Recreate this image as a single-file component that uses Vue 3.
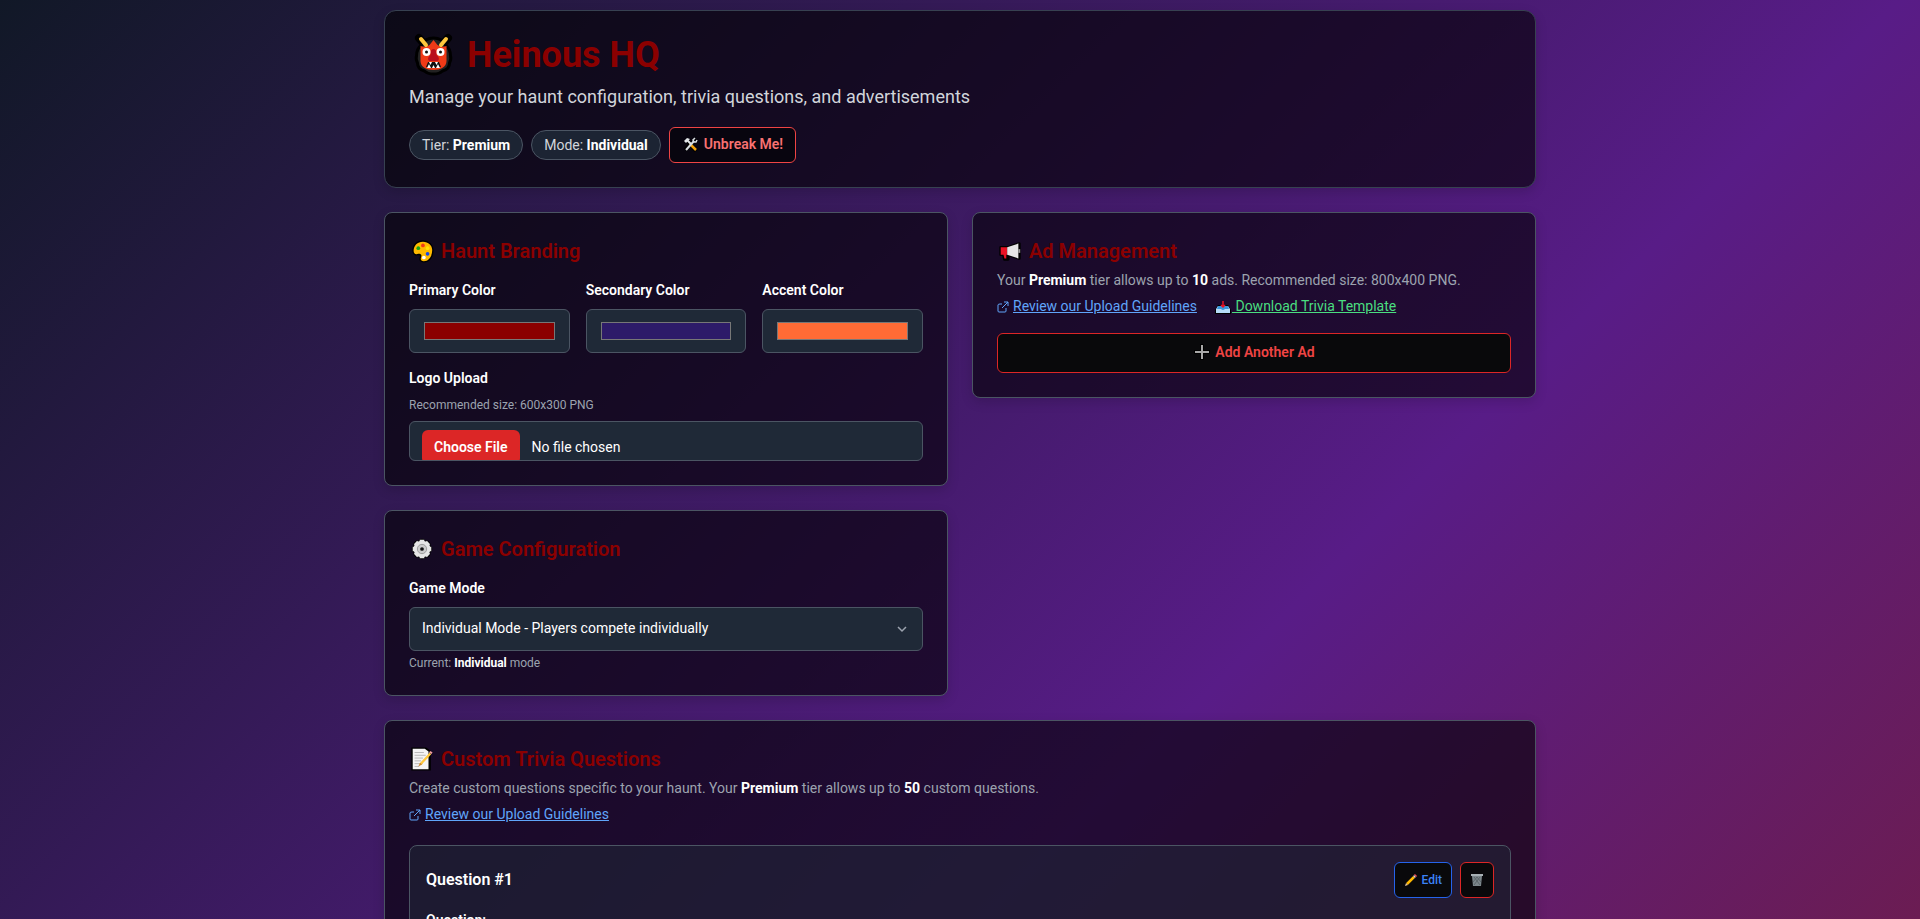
<script setup>
import { ref } from 'vue'

const colors = ref([
  { id: 'primary', label: 'Primary Color', value: '#8b0000' },
  { id: 'secondary', label: 'Secondary Color', value: '#2d1b69' },
  { id: 'accent', label: 'Accent Color', value: '#ff6b35' },
])
const mode = ref('individual')
</script>

<template>
  <div class="page">
    <main class="container">
      <header class="header">
        <h1>
          <svg class="ico-xl" viewBox="0 0 48 48" aria-hidden="true">
            <path d="M10 7l7 8M39 7l-7 8" stroke="#000" stroke-width="8" stroke-linecap="round" />
            <path d="M24.500 7c6 0 10 3 12 7 4 3 5 7 5 11 1 3 0 5-1 7 0 4-3 7-7 8-2 2-5 3-9 3s-7-1-9-3c-4-1-7-4-7-8-1-2-2-4-1-7 0-4 1-8 5-11 2-4 6-7 12-7z" fill="#222" stroke="#000" stroke-width="3" />
            <path d="M24.500 9l4 5c3 2 6 2 9 1v15c0 6-6 9-13 9s-13-3-13-9V15c3 1 6 1 9-1z" fill="#f03a17" />
            <path d="M24.500 18c3 0 3 4 3 6 3 2 3 5 1 6h-8c-2-1-2-4 1-6 0-2 0-6 3-6z" fill="#b80f1e" />
            <circle cx="17.500" cy="21" r="4" fill="#fff" /><circle cx="31.500" cy="21" r="4" fill="#fff" />
            <circle cx="17.500" cy="21" r="1.500" fill="#111" /><circle cx="31.500" cy="21" r="1.500" fill="#111" />
            <path d="M19 31h11l2 5-4 1h-7l-4-1z" fill="#111" />
            <path d="M20 31l1.500 3 1.500-3zM26 31l1.500 3 1.500-3zM18 37l2-4 2 4zM23 37l1.500-3 1.500 3zM27 37l2-4 2 4z" fill="#fff" />
            <path d="M12 8l5 6M37 8l-5 6" stroke="#ffc83d" stroke-width="4" stroke-linecap="round" />
          </svg>
          <span>Heinous HQ</span>
        </h1>
        <p class="lead">Manage your haunt configuration, trivia questions, and advertisements</p>
        <div class="badges">
          <span class="badge">Tier: <b>Premium</b></span>
          <span class="badge">Mode: <b>Individual</b></span>
          <button type="button" class="btn unbreak">
            <svg class="ico-m" viewBox="0 0 18 18" aria-hidden="true">
              <path d="M4 5l10 11M3 15L14 4" stroke="#000" stroke-width="4" />
              <path d="M8 9l6 6" stroke="#f5a30a" stroke-width="2.500" />
              <path d="M4 15l8-9" stroke="#d8dde0" stroke-width="2" />
              <path d="M13 3l-2 2 1 2 2 0 1-2" stroke="#d8dde0" stroke-width="1.500" />
              <path d="M2 6l3-3 3 1-4 4z" fill="#e2e6e8" />
              <path d="M5 5l4 4" stroke="#e2e6e8" stroke-width="2" />
            </svg>
            Unbreak Me!
          </button>
        </div>
      </header>

      <div class="columns">
        <div class="stack">
          <section class="card">
            <h2>
              <svg class="ico-l" viewBox="0 0 28 28" aria-hidden="true">
                <path d="M15 4c6 0 10 4 10 9 0 6-3 12-9 12-3 0-4-2-3-4 1-3 0-4-3-4-3 1-5 0-5-3 0-6 4-10 10-10z" fill="#ffb900" stroke="#000" stroke-width="3" paint-order="stroke" />
                <circle cx="10" cy="11" r="2" fill="#16a716" /><circle cx="15" cy="8" r="2" fill="#f03a17" />
                <circle cx="20" cy="11" r="2" fill="#ffe100" /><circle cx="20" cy="17" r="2" fill="#1848e8" />
                <circle cx="16" cy="21" r="2" fill="#fff" />
              </svg>
              <span>Haunt Branding</span>
            </h2>
            <div class="swatches">
              <div v-for="c in colors" :key="c.id" class="field">
                <label :for="c.id">{{ c.label }}</label>
                <input :id="c.id" v-model="c.value" type="color" class="control color">
              </div>
            </div>
            <div class="field upload">
              <label for="logo">Logo Upload</label>
              <p class="hint">Recommended size: 600x300 PNG</p>
              <input id="logo" type="file" accept="image/png" class="control file">
            </div>
          </section>

          <section class="card">
            <h2>
              <svg class="ico-l" viewBox="0 0 28 28" aria-hidden="true">
                <g stroke="#000" stroke-width="8" stroke-linecap="round"><path d="M14 7v14M7 14h14M9 9l10 10M19 9L9 19" /></g>
                <g stroke="#e6e6e6" stroke-width="5"><path d="M14 4v20M4 14h20M7 7l14 14M21 7L7 21" /></g>
                <circle cx="14" cy="14" r="9" fill="#e6e6e6" />
                <circle cx="14" cy="14" r="5" fill="#ccc" stroke="#999" />
                <circle cx="14" cy="14" r="2" fill="#111" />
              </svg>
              <span>Game Configuration</span>
            </h2>
            <div class="field">
              <label for="mode">Game Mode</label>
              <div class="select">
                <select id="mode" v-model="mode" class="control">
                  <option value="individual">Individual Mode - Players compete individually</option>
                </select>
                <svg class="chevron" viewBox="0 0 12 8" aria-hidden="true"><path d="M2 2l4 4 4-4" fill="none" stroke="#9ca3af" stroke-width="1.500" /></svg>
              </div>
            </div>
            <p class="current">Current: <b>Individual</b> mode</p>
          </section>
        </div>

        <section class="card">
          <h2>
            <svg class="ico-l" viewBox="0 0 28 28" aria-hidden="true">
              <path d="M24 6v16l-12-4v5H8l-1-5H4v-8h8z" fill="#000" stroke="#000" stroke-width="3" stroke-linejoin="round" />
              <path d="M4 10h7v8H4zM7 18h3v4H8z" fill="#e81224" />
              <path d="M11 10l12-4v16l-12-4z" fill="#e6e6e6" /><path d="M24 12v4" stroke="#999" stroke-width="2" />
            </svg>
            <span>Ad Management</span>
          </h2>
          <p class="text">Your <b>Premium</b> tier allows up to <b>10</b> ads. Recommended size: 800x400 PNG.</p>
          <div class="links">
            <span class="link">
              <svg class="ico-s" viewBox="0 0 12 12" aria-hidden="true"><path d="M5 3H3Q1 3 1 4v6q0 1 1 1h6q1 0 1-1V7M7 1h4v4M11 1L5 7" fill="none" stroke="#60a5fa" /></svg>
              <a href="#guidelines">Review our Upload Guidelines</a>
            </span>
            <a href="#template" class="green"><svg class="ico-tray" viewBox="0 0 18 18" aria-hidden="true">
              <path d="M4 8h10l3 5v4H1v-4z" fill="#000" />
              <path d="M4 9h10l2 3v4H2v-4z" fill="#b5dcf7" /><path d="M4 9h10l1 3h-4q-2 2-4 0H3z" fill="#3a96dd" />
              <path d="M9 4v6M7 8l2 2 2-2" stroke="#e81224" stroke-width="1.500" fill="none" />
            </svg>&nbsp;Download Trivia Template</a>
          </div>
          <button type="button" class="btn add">
            <svg class="ico-m" viewBox="0 0 18 18" aria-hidden="true"><path d="M9 1v16M1 9h16" stroke="#000" stroke-width="4" /><path d="M9 2v14M2 9h14" stroke="#a8a8a8" stroke-width="2" /></svg>
            Add Another Ad
          </button>
        </section>
      </div>

      <section class="card">
        <h2>
          <svg class="ico-l" viewBox="0 0 28 28" aria-hidden="true">
            <path d="M4 3h14l4 3v19H4z" stroke="#000" stroke-width="3" />
            <path d="M4 3h13l4 3v19H4z" fill="#f4f4f4" />
            <path d="M6 7h10M6 10h12M6 13h9M6 16h7M6 19h9M6 22h5" stroke="#b4b4b4" />
            <path d="M23 8L12 20" stroke="#ffc83d" stroke-width="2.500" /><path d="M24 6l-1 2" stroke="#f2a0a0" stroke-width="3" />
            <path d="M12 18l-2 4 4-2z" fill="#c9842f" />
          </svg>
          <span>Custom Trivia Questions</span>
        </h2>
        <p class="text">Create custom questions specific to your haunt. Your <b>Premium</b> tier allows up to <b>50</b> custom questions.</p>
        <div class="links">
          <span class="link">
            <svg class="ico-s" viewBox="0 0 12 12" aria-hidden="true"><path d="M5 3H3Q1 3 1 4v6q0 1 1 1h6q1 0 1-1V7M7 1h4v4M11 1L5 7" fill="none" stroke="#60a5fa" /></svg>
            <a href="#guidelines">Review our Upload Guidelines</a>
          </span>
        </div>
        <article class="question">
          <div class="question-head">
            <h3>Question #1</h3>
            <div class="actions">
              <button type="button" class="btn edit">
                <svg class="ico-p" viewBox="0 0 14 14" aria-hidden="true"><path d="M3 11l7-7" stroke="#ffb900" stroke-width="2.500" /><path d="M10 4l1-1" stroke="#d8d8d8" stroke-width="2.500" /><path d="M11 3l1-1" stroke="#e8505b" stroke-width="3" /><path d="M1 13l1-3 2 2z" fill="#e5c39a" /></svg>
                Edit
              </button>
              <button type="button" class="btn trash" aria-label="Delete question">
                <svg class="ico-p" viewBox="0 0 14 14" aria-hidden="true"><path d="M2 3h10l-1 10H3z" fill="#7b868b" /><path d="M1 2h12" stroke="#a7b0b4" stroke-width="2" /><path d="M4 4l6 8M7 4l4 5M10 4l-6 8M7 4L3 9" stroke="#5c666a" stroke-width="1" /></svg>
              </button>
            </div>
          </div>
          <h4>Question:</h4>
        </article>
      </section>
    </main>
  </div>
</template>

<style>
body {
  background: #111827;
}
</style>

<style scoped>
* {
  box-sizing: border-box;
  margin: 0;
}
.page {
  height: 100vh;
  overflow: hidden;
  padding: 10px 24px 0;
  font-family: Roboto, "Liberation Sans", sans-serif;
  font-size: 14px;
  line-height: 20px;
  color: #fff;
  background: linear-gradient(135deg, #111827, #581c87, #7f1d1d) 0 0 / 100% 1880px no-repeat;
}
.container {
  max-width: 1152px;
  margin: 0 auto;
  display: flex;
  flex-direction: column;
  gap: 24px;
}
.header,
.card {
  padding: 24px;
  background: rgba(0, 0, 0, 0.6);
  border: 1px solid #4b5563;
  border-radius: 8px;
  box-shadow: 0 4px 12px rgba(0, 0, 0, 0.15);
}
.header {
  border-color: #374151;
  border-radius: 12px;
}
h1,
h2 {
  display: flex;
  align-items: center;
  color: #8b0000;
}
h1 {
  gap: 10px;
  font-size: 36px;
  line-height: 40px;
  font-weight: 700;
}
h2 {
  gap: 6px;
  font-size: 20px;
  line-height: 28px;
  font-weight: 600;
}
svg {
  flex: none;
  fill: none;
}
.ico-xl {
  width: 48px;
  height: 48px;
  margin: -4px 0;
}
.ico-l {
  width: 26px;
  height: 26px;
}
.ico-m {
  width: 18px;
  height: 18px;
}
.ico-s {
  width: 12px;
  height: 12px;
}
.ico-p {
  width: 14px;
  height: 14px;
}
.lead {
  margin-top: 8px;
  font-size: 18px;
  line-height: 28px;
  color: #d1d5db;
}
.badges {
  display: flex;
  align-items: center;
  gap: 8px;
  margin-top: 16px;
}
.badge {
  padding: 4px 12px;
  border: 1px solid #4b5563;
  border-radius: 15px;
  background: #1c2433;
  color: #d1d5db;
}
b {
  color: #fff;
  font-weight: 700;
}
.btn {
  display: flex;
  align-items: center;
  justify-content: center;
  gap: 4px;
  height: 36px;
  padding: 0 12px 2px;
  border: 1px solid #dc2626;
  border-radius: 6px;
  background: #09090b;
  color: #ef4444;
  font: 600 14px/20px Roboto, "Liberation Sans", sans-serif;
}
.unbreak {
  border-color: #ef4444;
  background: #08050f;
  color: #f87171;
}
.columns {
  display: grid;
  grid-template-columns: 1fr 1fr;
  align-items: start;
  gap: 24px;
}
.stack {
  display: grid;
  gap: 24px;
}
.swatches {
  display: grid;
  grid-template-columns: repeat(3, 1fr);
  gap: 16px;
}
.field,
.swatches {
  margin-top: 16px;
}
.swatches .field {
  margin-top: 0;
}
label {
  display: block;
  margin-bottom: 10px;
  line-height: 18px;
  font-weight: 600;
}
.control {
  display: block;
  width: 100%;
  height: 44px;
  padding: 8px 12px;
  border: 1px solid #4b5563;
  border-radius: 6px;
  background: #1f2937;
  color: #fff;
  font: 400 14px/20px Roboto, "Liberation Sans", sans-serif;
}
.file {
  height: 40px;
}
.file::file-selector-button {
  margin: 0 12px 0 0;
  padding: 8px 12px;
  border: 0;
  border-radius: 6px;
  background: #dc2626;
  color: #fff;
  font: 600 14px/18px Roboto, "Liberation Sans", sans-serif;
}
.hint,
.current {
  font-size: 12px;
  line-height: 16px;
  color: #9ca3af;
}
.hint {
  margin-bottom: 8px;
}
.current {
  margin-top: 4px;
}
.select {
  position: relative;
}
select.control {
  appearance: none;
  padding-bottom: 10px;
}
.chevron {
  position: absolute;
  top: 18px;
  right: 15px;
  width: 12px;
  height: 8px;
}
.text {
  margin-top: 4px;
  line-height: 23px;
  color: #9ca3af;
}
.links {
  display: flex;
  gap: 16px;
  margin-top: 4px;
  line-height: 21px;
}
.link {
  display: flex;
  align-items: center;
  gap: 4px;
}
a {
  color: #60a5fa;
  text-decoration: underline;
}
a.green {
  color: #4ade80;
}
.ico-tray {
  width: 18px;
  height: 18px;
  margin-left: 1px;
  vertical-align: -4px;
}
.add {
  width: 100%;
  height: 40px;
  margin-top: 16px;
}
.question {
  margin-top: 20px;
  padding: 16px;
  border: 1px solid #4b5563;
  border-radius: 8px;
  background: rgba(31, 41, 55, 0.5);
}
.question-head {
  display: flex;
  align-items: center;
  justify-content: space-between;
}
h3 {
  font-size: 16px;
  line-height: 24px;
  font-weight: 600;
}
h4 {
  margin-top: 12px;
  font-size: 14px;
  font-weight: 600;
}
.actions {
  display: flex;
  gap: 8px;
}
.edit {
  padding: 0 9px;
  border-color: #2563eb;
  color: #3b82f6;
  font-size: 12px;
  font-weight: 500;
}
.trash {
  padding: 0 9px;
}
</style>
